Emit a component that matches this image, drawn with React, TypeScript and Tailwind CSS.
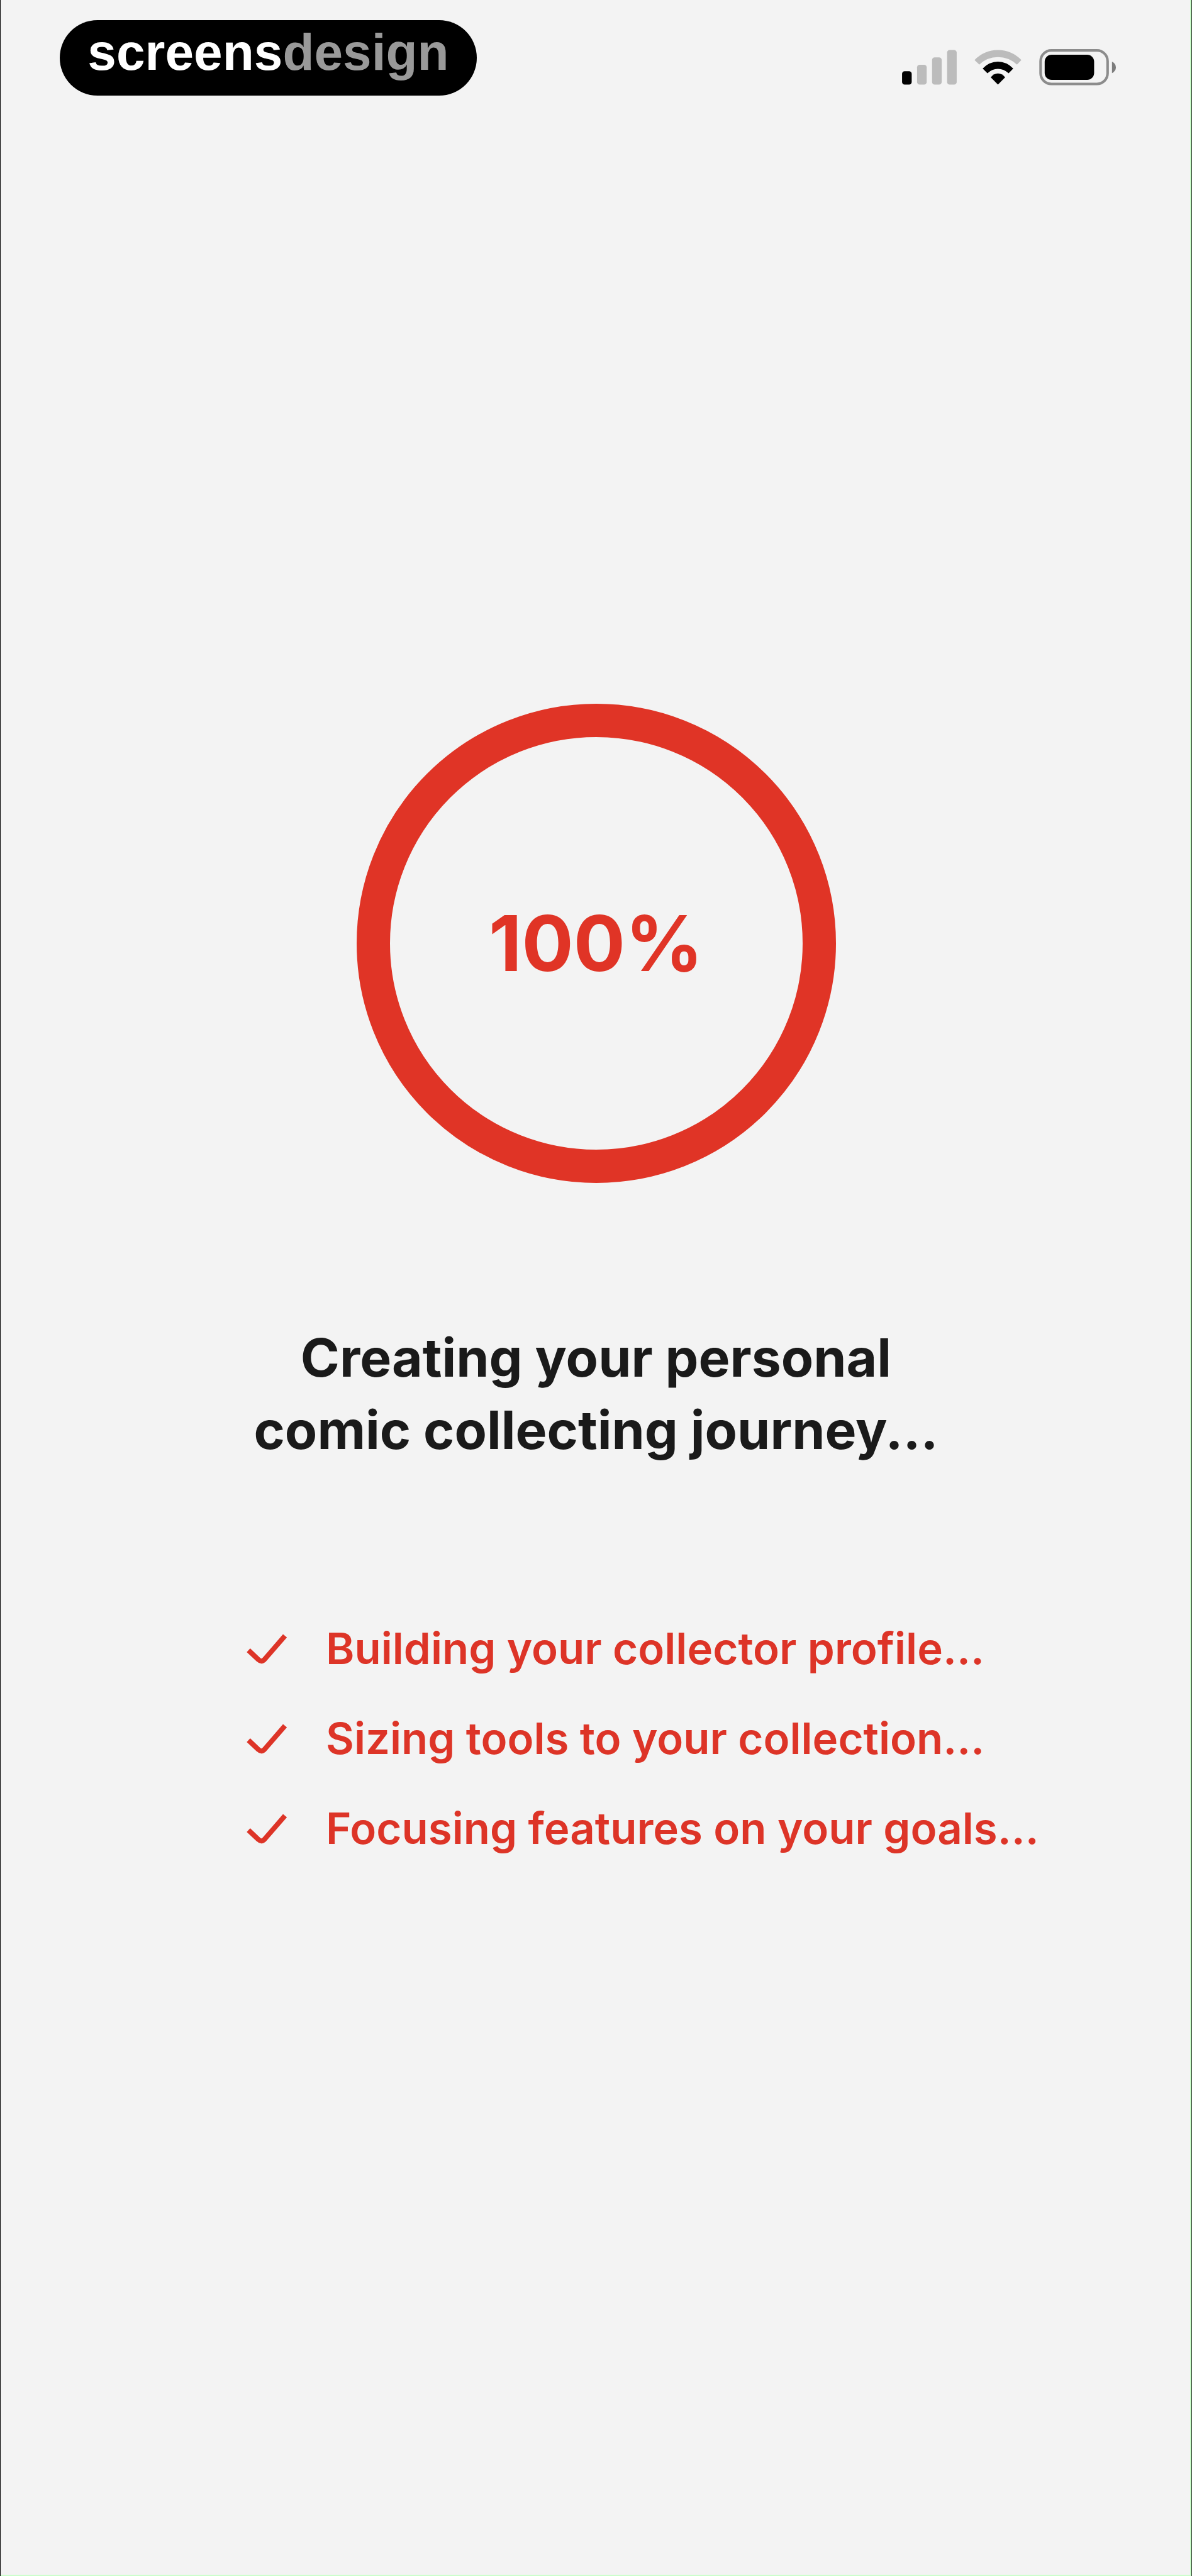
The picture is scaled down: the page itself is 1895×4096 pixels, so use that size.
// App.tsx
const steps = [
    "Building your collector profile...",
    "Sizing tools to your collection...",
    "Focusing features on your goals...",
];

function SignalIcon() {
    return (
        <svg viewBox="108 87 295 197" className="h-[58px] w-[87px]" aria-label="Signal">
            <rect x="108" y="207" width="52" height="72" rx="14" fill="#000" />
            <rect x="189" y="172" width="52" height="107" rx="14" fill="#bcbcbc" />
            <rect x="270" y="132" width="52" height="147" rx="14" fill="#bcbcbc" />
            <rect x="351" y="92" width="52" height="187" rx="14" fill="#bcbcbc" />
        </svg>
    );
}

function WifiIcon() {
    return (
        <svg viewBox="498 87 256 197" className="h-[58px] w-[75px]" aria-label="Wi-Fi">
            <path d="M499 146 Q553 92 626 92 Q699 92 753 146 L729 171 Q685 130 626 130 Q567 130 525 171 Z" fill="#bcbcbc" />
            <path d="M543 192 Q580 155 626 155 Q672 155 709 192 L684 218 Q658 194 626 194 Q594 194 569 218 Z" fill="#000" />
            <path d="M587 240 Q604 219 626 219 Q648 219 665 240 L626 279 Z" fill="#000" />
        </svg>
    );
}

function BatteryIcon() {
    return (
        <svg viewBox="850 87 416 197" className="h-[58px] w-[122px]" aria-label="Battery">
            <rect x="858" y="94" width="363" height="182" rx="58" fill="none" stroke="#8c8c8c" strokeWidth="14" />
            <rect x="880" y="117" width="268" height="137" rx="38" fill="#000" />
            <path d="M1245 155 Q1266 166 1266 186 Q1266 206 1245 217 Z" fill="#7c7c7c" />
        </svg>
    );
}

function CheckIcon() {
    return (
        <svg viewBox="0 0 64 50" className="h-[50px] w-16 shrink-0" fill="none" stroke="#dd3427" strokeWidth="8" aria-hidden="true">
            <path d="M3 27 L19 42 Q24 47 29 41 L61 4" />
        </svg>
    );
}

export default function App() {
    return (
        <div className="flex min-h-screen flex-col border-x border-l-black border-r-[#203020] bg-[#f3f3f3] font-['Inter',sans-serif] shadow-[inset_-2px_-2px_0_#ccffcc]">
            <header className="flex items-start justify-between pt-8 pr-[120px] pl-[94px]">
                <div className="flex h-[120px] w-[663px] justify-center rounded-[60px] bg-black pt-1 font-['Liberation_Sans',sans-serif] text-[82px] leading-[94px] font-bold text-white">
                    screens<span className="text-[#999999]">design</span>
                </div>
                <div className="flex gap-7 pt-[46px]">
                    <SignalIcon />
                    <WifiIcon />
                    <BatteryIcon />
                </div>
            </header>

            <main className="flex flex-col pt-[967px]">
                <div
                    role="progressbar"
                    aria-valuenow={100}
                    className="flex size-[762px] items-center justify-center self-center rounded-full border-[53px] border-[#e03426] text-[122px] leading-none font-bold text-[#e03426]"
                >
                    100%
                </div>

                <h1 className="mt-[220px] text-center text-[84px] leading-[115px] font-bold text-[#1a1a1a]">
                    Creating your personal
                    <br />
                    comic collecting journey...
                </h1>

                <ul className="mt-[249px] flex flex-col gap-15 pl-[391px] text-[69px] leading-[83px] font-semibold text-[#dd3427]">
                    {steps.map((step) => (
                        <li key={step} className="flex items-center gap-[62px] whitespace-nowrap">
                            <CheckIcon />
                            {step}
                        </li>
                    ))}
                </ul>
            </main>
        </div>
    );
}
